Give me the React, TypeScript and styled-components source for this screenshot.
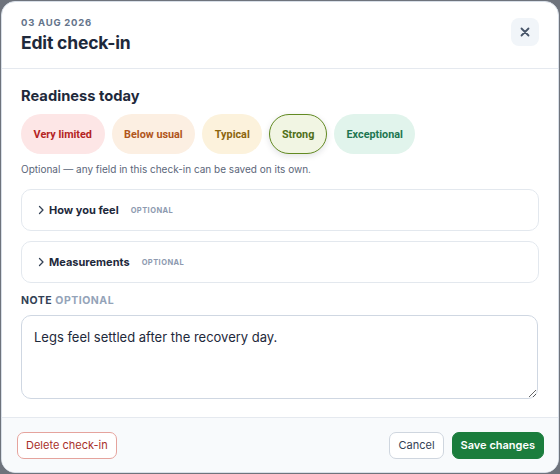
import styled, { createGlobalStyle } from "styled-components";

const GlobalStyle = createGlobalStyle`
  html, body {
    margin: 0;
    padding: 0;
    background: #6e737c;
    font-family: Inter, "Noto Sans", sans-serif;
  }
  * { box-sizing: border-box; }
`;

type Tone = "red" | "orange" | "yellow" | "green" | "teal";

const tones: Record<Tone, { bg: string; fg: string; border: string }> = {
  red: { bg: "#fde6e6", fg: "#b42323", border: "transparent" },
  orange: { bg: "#fcefe2", fg: "#b0561b", border: "transparent" },
  yellow: { bg: "#fcf2dc", fg: "#8c650d", border: "transparent" },
  green: { bg: "#f1f5e3", fg: "#4f6e18", border: "#628a22" },
  teal: { bg: "#e1f4ec", fg: "#1d7650", border: "transparent" },
};

const readiness: { label: string; tone: Tone; selected?: boolean }[] = [
  { label: "Very limited", tone: "red" },
  { label: "Below usual", tone: "orange" },
  { label: "Typical", tone: "yellow" },
  { label: "Strong", tone: "green", selected: true },
  { label: "Exceptional", tone: "teal" },
];

const App = () => {
  return (
    <>
      <GlobalStyle />
      <Backdrop>
        <Dialog>
          <Header>
            <div>
              <DateLabel>03 Aug 2026</DateLabel>
              <Title>Edit check-in</Title>
            </div>
            <CloseButton aria-label="Close">
              <svg width="12" height="12" viewBox="0 0 12 12">
                <path
                  d="M2.5 2.5l7 7M9.5 2.5l-7 7"
                  stroke="#475569"
                  strokeWidth="1.8"
                  strokeLinecap="round"
                />
              </svg>
            </CloseButton>
          </Header>

          <Body>
            <SectionTitle>Readiness today</SectionTitle>
            <ChipRow>
              {readiness.map((r) => (
                <Chip key={r.label} $tone={r.tone} $selected={!!r.selected}>
                  {r.label}
                </Chip>
              ))}
            </ChipRow>
            <Helper>Optional — any field in this check-in can be saved on its own.</Helper>

            <Accordion>
              <Chevron />
              <AccordionTitle>How you feel</AccordionTitle>
              <OptionalTag>Optional</OptionalTag>
            </Accordion>
            <Accordion>
              <Chevron />
              <AccordionTitle>Measurements</AccordionTitle>
              <OptionalTag>Optional</OptionalTag>
            </Accordion>

            <FieldLabel>
              Note <span>Optional</span>
            </FieldLabel>
            <NoteArea defaultValue="Legs feel settled after the recovery day." />
          </Body>

          <Footer>
            <DangerButton>Delete check-in</DangerButton>
            <FooterActions>
              <GhostButton>Cancel</GhostButton>
              <PrimaryButton>Save changes</PrimaryButton>
            </FooterActions>
          </Footer>
        </Dialog>
      </Backdrop>
    </>
  );
};

const Chevron = () => (
  <svg width="10" height="10" viewBox="0 0 10 10">
    <path
      d="M3.5 1.5L7 5l-3.5 3.5"
      fill="none"
      stroke="#334155"
      strokeWidth="1.3"
      strokeLinecap="round"
      strokeLinejoin="round"
    />
  </svg>
);

const Backdrop = styled.div`
  width: 560px;
  height: 474px;
  padding: 1px;
`;

const Dialog = styled.div`
  width: 558px;
  height: 472px;
  background: #ffffff;
  border: 1px solid #d8dfe8;
  border-radius: 14px;
  overflow: hidden;
  display: flex;
  flex-direction: column;
`;

const Header = styled.header`
  display: flex;
  justify-content: space-between;
  align-items: flex-start;
  padding: 15px 19px 0 19px;
  height: 67px;
  border-bottom: 1px solid #e5e9ef;
`;

const DateLabel = styled.div`
  font-size: 9.5px;
  font-weight: 700;
  letter-spacing: 0.08em;
  text-transform: uppercase;
  color: #64748b;
  line-height: 12px;
`;

const Title = styled.h1`
  margin: 3px 0 0;
  font-size: 17.5px;
  font-weight: 700;
  color: #1e293b;
  line-height: 22px;
  letter-spacing: -0.01em;
`;

const CloseButton = styled.button`
  width: 28px;
  height: 28px;
  margin-top: 1px;
  border: none;
  border-radius: 8px;
  background: #f1f5f9;
  display: flex;
  align-items: center;
  justify-content: center;
  padding: 0;
`;

const Body = styled.div`
  flex: 1;
  padding: 17px 19px 0 19px;
  display: flex;
  flex-direction: column;
`;

const SectionTitle = styled.h2`
  margin: 0;
  font-size: 14.7px;
  font-weight: 700;
  color: #1e293b;
  line-height: 20px;
`;

const ChipRow = styled.div`
  display: flex;
  gap: 7px;
  margin-top: 8px;
`;

const Chip = styled.button<{ $tone: Tone; $selected: boolean }>`
  height: 40px;
  padding: 0 11.6px;
  border-radius: 20px;
  font-family: Roboto, "Noto Sans", sans-serif;
  font-size: 10.8px;
  font-weight: 700;
  background: ${(p) => tones[p.$tone].bg};
  color: ${(p) => tones[p.$tone].fg};
  border: 1px solid ${(p) => tones[p.$tone].border};
  box-shadow: ${(p) => (p.$selected ? "0 2px 6px rgba(15, 23, 42, 0.12)" : "none")};
`;

const Helper = styled.p`
  margin: 8px 0 0;
  font-size: 10px;
  color: #5b6679;
  line-height: 14px;
`;

const Accordion = styled.div`
  margin-top: 13px;
  height: 42px;
  border: 1px solid #e3e8ee;
  border-radius: 10px;
  display: flex;
  align-items: center;
  padding: 0 14px;
  gap: 3px;

  & + & {
    margin-top: 10px;
  }
`;

const AccordionTitle = styled.span`
  font-size: 11px;
  font-weight: 700;
  color: #1e293b;
`;

const OptionalTag = styled.span`
  margin-left: 9px;
  font-size: 7.5px;
  font-weight: 700;
  letter-spacing: 0.06em;
  text-transform: uppercase;
  color: #8d9ab0;
`;

const FieldLabel = styled.div`
  margin-top: 11px;
  font-size: 10.5px;
  font-weight: 700;
  letter-spacing: 0.05em;
  text-transform: uppercase;
  color: #334155;
  line-height: 14px;

  span {
    color: #94a3b8;
  }
`;

const NoteArea = styled.textarea`
  margin-top: 7px;
  width: 517px;
  height: 84px;
  border: 1px solid #cfd7e2;
  border-radius: 10px;
  padding: 12px 12px;
  font-family: Inter, "Noto Sans", sans-serif;
  font-size: 13px;
  line-height: 18px;
  color: #1e293b;
  resize: vertical;
  outline: none;
`;

const Footer = styled.footer`
  height: 55px;
  border-top: 1px solid #e5e9ef;
  background: #f8fafc;
  display: flex;
  align-items: center;
  justify-content: space-between;
  padding: 0 14px 0 15px;
`;

const FooterActions = styled.div`
  display: flex;
  gap: 8px;
`;

const BaseButton = styled.button`
  height: 27px;
  padding: 0 8px;
  border-radius: 7px;
  font-family: Inter, "Noto Sans", sans-serif;
  font-size: 11px;
`;

const DangerButton = styled(BaseButton)`
  background: #ffffff;
  border: 1px solid #e5a39d;
  color: #a8302a;
`;

const GhostButton = styled(BaseButton)`
  background: #ffffff;
  border: 1px solid #cfd6df;
  color: #334155;
`;

const PrimaryButton = styled(BaseButton)`
  background: #1b7d3d;
  border: 1px solid #1b7d3d;
  color: #ffffff;
  font-weight: 600;
`;

export default App;
